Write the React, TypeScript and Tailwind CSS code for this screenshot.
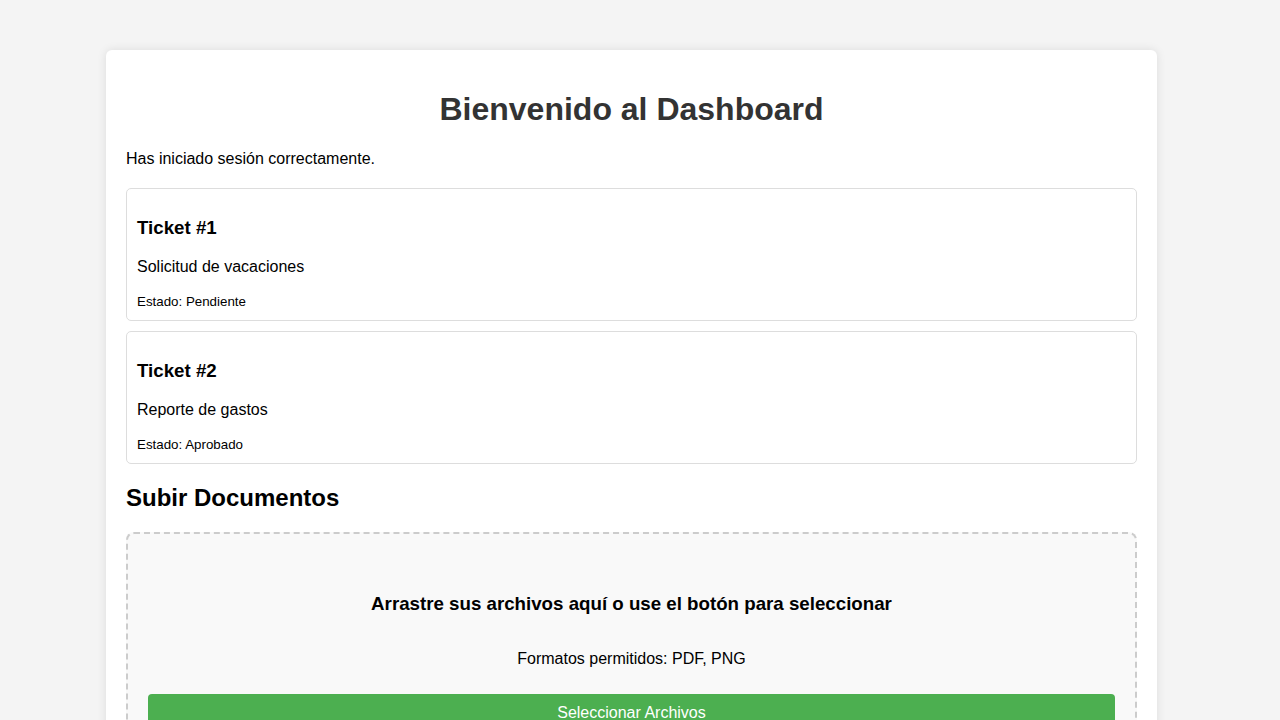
import React from "react";

type Ticket = { id: number; title: string; status: string };

const tickets: Ticket[] = [
  { id: 1, title: "Solicitud de vacaciones", status: "Pendiente" },
  { id: 2, title: "Reporte de gastos", status: "Aprobado" },
];

const uploaded = ["contrato_2024.pdf", "recibo_enero.png", "factura_001.pdf"];

function TicketCard({ ticket }: { ticket: Ticket }) {
  return (
    <div className="mb-[10px] rounded-[5px] border border-[#ddd] bg-white px-[10px] pt-[10px] pb-[11px]">
      <h3 className="mt-[18px] text-[18.72px] font-bold leading-[22px] text-black">
        Ticket #{ticket.id}
      </h3>
      <p className="mt-[19px] text-[16px] leading-[18px] text-black">{ticket.title}</p>
      <p className="mt-[18px] text-[13.33px] leading-[15px] text-black">
        Estado: {ticket.status}
      </p>
    </div>
  );
}

export default function App() {
  return (
    <div
      className="min-h-screen bg-[#f4f4f4] py-[50px] pr-[17px]"
      style={{ fontFamily: '"Liberation Sans", Arial, sans-serif' }}
    >
      <div className="mx-auto w-[1051px] rounded-md bg-white p-5 shadow-[0_0_10px_rgba(0,0,0,0.1)]">
        <h1 className="mt-[21px] text-center text-[32px] font-bold leading-[37px] text-[#333]">
          Bienvenido al Dashboard
        </h1>
        <p className="mt-[22px] mb-5 text-[16px] leading-[18px] text-black">
          Has iniciado sesión correctamente.
        </p>

        {tickets.map((t) => (
          <TicketCard key={t.id} ticket={t} />
        ))}

        <h2 className="mt-[20px] text-[24px] font-bold leading-[28px] text-black">
          Subir Documentos
        </h2>

        <div className="mt-5 rounded-lg border-2 border-dashed border-[#ccc] bg-[#f9f9f9] px-5 py-10 text-center">
          <h3 className="mt-[19px] text-[18.72px] font-bold leading-[22px] text-black">
            Arrastre sus archivos aquí o use el botón para seleccionar
          </h3>
          <p className="mt-[35px] text-[16px] leading-[18px] text-black">
            Formatos permitidos: PDF, PNG
          </p>
          <button
            type="button"
            className="mt-[26px] w-full rounded bg-[#4caf50] py-[10px] text-[16px] leading-[18px] text-white"
          >
            Seleccionar Archivos
          </button>
        </div>

        <h2 className="mt-[20px] text-[24px] font-bold leading-[28px] text-black">
          Documentos Subidos
        </h2>
        <ul className="mt-5">
          {uploaded.map((name) => (
            <li
              key={name}
              className="mb-[10px] flex items-center justify-between rounded-[5px] border border-[#ddd] px-[10px] py-[10px] text-[16px] leading-[18px] text-black"
            >
              <span>{name}</span>
              <span className="text-[13.33px] text-[#666]">Subido</span>
            </li>
          ))}
        </ul>

        <button
          type="button"
          className="mt-5 rounded bg-[#f44336] px-5 py-[10px] text-[16px] leading-[18px] text-white"
        >
          Cerrar sesión
        </button>
      </div>
    </div>
  );
}
